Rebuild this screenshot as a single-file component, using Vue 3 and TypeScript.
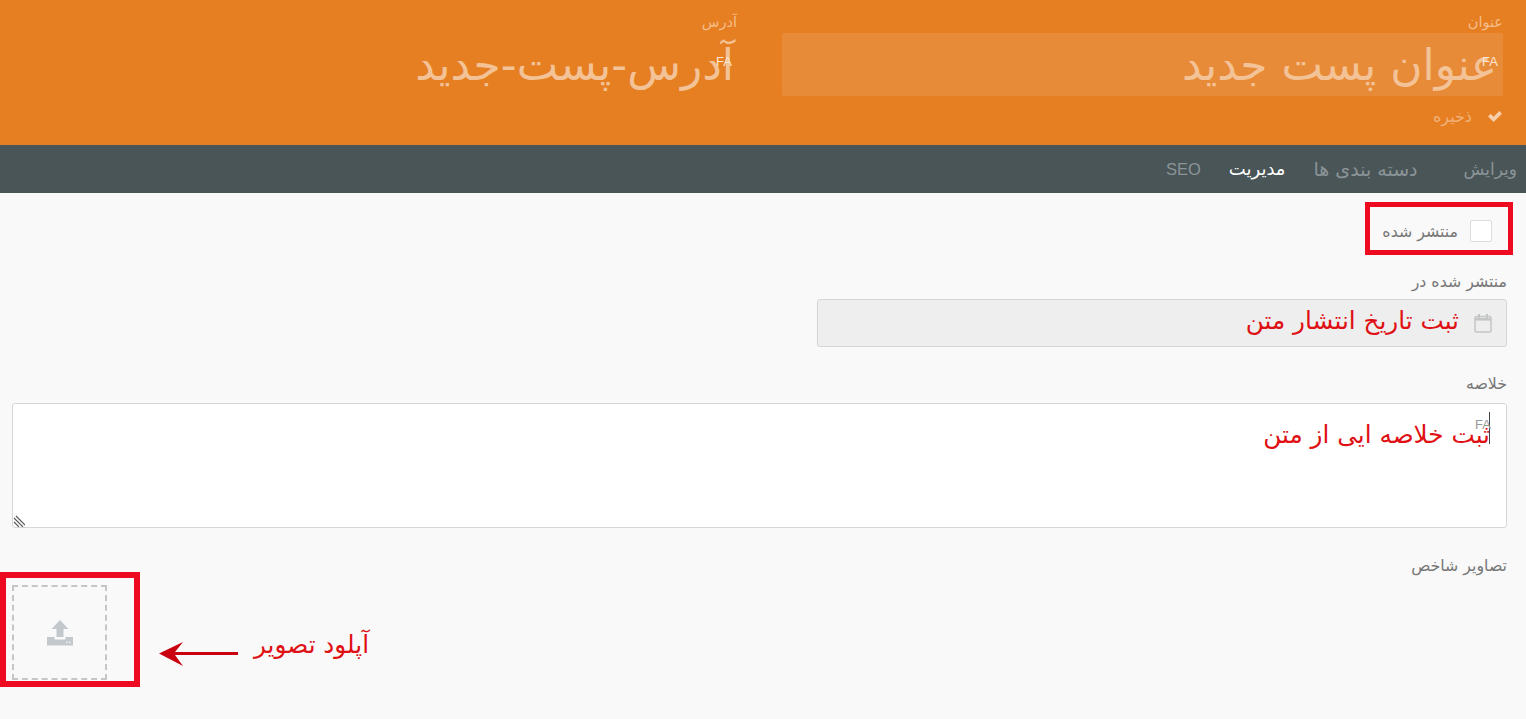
<script setup lang="ts">
const tabs = [
  { label: 'ویرایش', active: false },
  { label: 'دسته بندی ها', active: false },
  { label: 'مدیریت', active: true },
  { label: 'SEO', active: false },
]
</script>

<template>
  <div class="page" dir="rtl">
    <header class="hero">
      <div class="hero-col">
        <label class="hero-label">عنوان</label>
        <div class="hero-field tinted">
          <span class="lang">FA</span>
          <span class="hero-text">عنوان پست جدید</span>
        </div>
        <div class="save">
          <svg class="check" viewBox="0 0 16 16" width="16" height="16"><path d="M1 8.500 L3.700 5.800 L6.600 8.700 L12.300 3 L15 5.700 L6.600 14 Z" fill="currentColor" /></svg>
          <span>ذخیره</span>
        </div>
      </div>
      <div class="hero-col">
        <label class="hero-label">آدرس</label>
        <div class="hero-field">
          <span class="lang">FA</span>
          <span class="hero-text">آدرس-پست-جدید</span>
        </div>
      </div>
    </header>

    <nav class="tabs">
      <a v-for="t in tabs" :key="t.label" class="tab" :class="{ active: t.active }">{{ t.label }}</a>
    </nav>

    <main class="content">
      <div class="publish-row">
        <div class="publish-box">
          <span class="checkbox"></span>
          <span class="publish-label">منتشر شده</span>
        </div>
      </div>

      <label class="field-label date-label">منتشر شده در</label>
      <div class="date-input">
        <svg class="cal" viewBox="0 0 18 20" width="18" height="20">
          <path d="M1 5 a1.500 1.500 0 0 1 1.500-1.500 h13 a1.500 1.500 0 0 1 1.500 1.500 v12.500 a1.500 1.500 0 0 1-1.500 1.500 h-13 a1.500 1.500 0 0 1-1.500-1.500 Z" fill="none" stroke="currentColor" stroke-width="1.500" />
          <path d="M1 5 h16 v2.600 h-16 Z" fill="currentColor" />
          <rect x="4" y="1" width="2" height="4" fill="currentColor" />
          <rect x="12" y="1" width="2" height="4" fill="currentColor" />
        </svg>
        <span class="note date-note">ثبت تاریخ انتشار متن</span>
      </div>

      <label class="field-label summary-label">خلاصه</label>
      <div class="summary">
        <span class="caret"></span>
        <span class="lang summary-lang">FA</span>
        <span class="note summary-note">ثبت خلاصه ایی از متن</span>
        <svg class="grip" viewBox="0 0 12 12" width="12" height="12">
          <path d="M1 3 L10 12 M1 7 L6 12 M3 1 L12 10" stroke="#555" stroke-width="1.100" fill="none" />
        </svg>
      </div>

      <label class="field-label images-label">تصاویر شاخص</label>
      <div class="upload-row">
        <div class="upload-frame">
          <div class="upload">
            <svg viewBox="0 0 28 28" width="28" height="28">
              <path d="M14 1 L22.500 10 H17.500 V18 H10.500 V10 H5.500 Z" fill="#c3c8cc" />
              <path d="M1 18 H8.500 V20.500 H19.500 V18 H27 V26.500 H1 Z" fill="#c3c8cc" />
              <rect x="20" y="22.500" width="1.600" height="1.600" fill="#eef0f1" />
              <rect x="23" y="22.500" width="1.600" height="1.600" fill="#eef0f1" />
            </svg>
          </div>
        </div>
        <svg class="arrow" viewBox="0 0 79 24" width="79" height="24">
          <path d="M0 11.500 L24 0 L16 10 H79 V13 H16 L24 24 Z" fill="#c8000f" />
        </svg>
        <span class="note upload-note">آپلود تصویر</span>
      </div>
    </main>
  </div>
</template>

<style>
html, body { margin: 0; background: #f9f9f9; }
</style>

<style scoped>
.page {
  width: 1526px;
  height: 719px;
  overflow: hidden;
  background: #f9f9f9;
  font-family: "DejaVu Sans", "Noto Sans", sans-serif;
  color: #666;
}
.hero {
  height: 145px;
  box-sizing: border-box;
  background: #e67e22;
  display: flex;
  gap: 45px;
  padding: 14px 23px 0 16px;
}
.hero-col { width: 721px; }
.hero-label {
  display: block;
  font-size: 14.500px;
  line-height: 16px;
  height: 19px;
  color: #f5bd88;
}
.hero-field {
  position: relative;
  height: 63px;
  display: flex;
  align-items: center;
  box-sizing: border-box;
}
.tinted { background: rgba(255, 255, 255, 0.1); border-radius: 2px; }
.hero-text {
  font-size: 44px;
  color: #f3c296;
  line-height: 63px;
  margin-right: 3px;
}
.tinted .hero-text { margin-right: 6px; }
.lang {
  position: absolute;
  right: 5px;
  top: 22px;
  font-family: "Liberation Sans", sans-serif;
  font-size: 13px;
  line-height: 14px;
  color: #fbe6d2;
}
.save {
  display: flex;
  align-items: center;
  gap: 15px;
  height: 40px;
  color: #f2b27a;
  font-size: 16px;
}
.check { color: #f7cfa8; flex: none; }
.tabs {
  height: 48px;
  background: #4a5558;
  display: flex;
  align-items: center;
  gap: 28px;
  padding: 0 9px;
}
.tab {
  color: #8b9497;
  font-size: 18px;
  line-height: 48px;
}
.tab:first-child { margin-left: 18px; font-size: 17px; }
.tab:nth-child(2) { font-size: 19px; }
.tab:last-child { font-size: 16.500px; font-family: "Liberation Sans", sans-serif; }
.tab.active { color: #ffffff; }
.content { padding: 0 19px 0 19px; }
.publish-row {
  display: flex;
  padding: 9px 0 0;
  margin-right: -6px;
}
.publish-box {
  width: 148px;
  height: 53px;
  box-sizing: border-box;
  border: 5px solid #ee0b22;
  display: flex;
  align-items: center;
  gap: 12px;
  padding: 5px 16px 0 0;
}
.checkbox {
  width: 22px;
  height: 22px;
  flex: none;
  box-sizing: border-box;
  background: #fff;
  border: 1px solid #ddd;
  border-radius: 2px;
}
.publish-label { font-size: 15.800px; color: #777; white-space: nowrap; }
.field-label {
  display: block;
  font-size: 15.800px;
  line-height: 18px;
  color: #777;
}
.date-label { margin-top: 18px; }
.date-input {
  margin-top: 8px;
  width: 690px;
  height: 48px;
  box-sizing: border-box;
  background: #eeeeee;
  border: 1px solid #d6d6d6;
  border-radius: 3px;
  display: flex;
  align-items: center;
  gap: 15px;
  padding-right: 14px;
}
.cal { color: #c4c6c6; flex: none; }
.note {
  color: #e00f14;
  font-family: "DejaVu Sans", sans-serif;
  font-size: 24.700px;
}
.date-note { margin-bottom: 6px; }
.summary-label { margin-top: 28px; }
.summary {
  position: relative;
  margin-top: 10px;
  margin-left: -7px;
  height: 125px;
  box-sizing: border-box;
  background: #fff;
  border: 1px solid #d6d6d6;
  border-radius: 3px;
  padding: 16px 16px 0 0;
}
.caret {
  position: absolute;
  right: 16px;
  top: 8px;
  width: 1px;
  height: 32px;
  background: #444;
}
.summary-lang { color: #999; top: 14px; right: 15px; }
.grip { position: absolute; left: 0; bottom: 0; }
.images-label { margin-top: 29px; }
.upload-row {
  display: flex;
  flex-direction: row-reverse;
  justify-content: flex-start;
  align-items: flex-start;
  margin-top: -3px;
  margin-left: -19px;
}
.upload-frame {
  width: 140px;
  height: 115px;
  box-sizing: border-box;
  border: 6px solid #ee0b22;
  padding: 7px 27px 0 6px;
  flex: none;
}
.upload {
  width: 95px;
  height: 95px;
  box-sizing: border-box;
  border: 2px dashed #c4c6c8;
  display: flex;
  align-items: center;
  justify-content: center;
}
.arrow { margin: 70px 16px 0 19px; flex: none; }
.upload-note { margin-top: 54px; line-height: 38px; }
</style>
